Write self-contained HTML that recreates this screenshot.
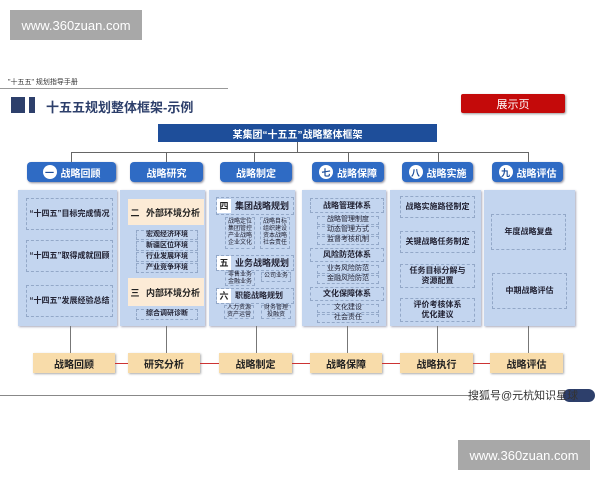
<!DOCTYPE html>
<html><head><meta charset="utf-8"><style>
*{margin:0;padding:0;box-sizing:border-box}
body{width:600px;height:480px;background:#fff;position:relative;overflow:hidden;font-family:"Liberation Sans","Noto Sans CJK SC",sans-serif;color:#1f2f5a}
.a{position:absolute}
.wm{background:#a8a8a8;color:#fff;font-size:13px;display:flex;align-items:center;justify-content:center}
.btn{background:#2f6bc4;color:#fff;font-size:10px;font-weight:bold;border-radius:4px;display:flex;align-items:center;justify-content:center;box-shadow:1px 1px 2px #889}
.circ{width:14px;height:14px;border-radius:50%;background:#fff;color:#1e4e9a;font-size:9px;display:inline-flex;align-items:center;justify-content:center;margin-right:4px}
.pan{background:#c3d5ef;box-shadow:1px 1px 2px #aab}
.dt{border:1px dashed #93a8c8;font-size:8px;font-weight:bold;color:#223;display:flex;align-items:center;justify-content:center;text-align:center;line-height:1.2}
.sm{font-size:6px;font-weight:normal}
.org{background:#f8dcaa;font-size:10px;font-weight:bold;color:#222;display:flex;align-items:center;justify-content:center;box-shadow:1px 1px 2px #aaa}
.beige{background:#fcebd6;font-size:9px;font-weight:bold;display:flex;align-items:center;color:#222}
.vl{background:#777;width:1px}
.ra{height:1px;background:#c33}
.lab{background:#fff;font-size:9px;font-weight:bold;color:#222;width:14px;height:14px;display:inline-flex;align-items:center;justify-content:center;margin-right:4px}
</style></head><body>
<div class="a wm" style="left:10px;top:10px;width:132px;height:30px">www.360zuan.com</div>
<div class="a" style="left:8px;top:77px;font-size:7px;color:#333">"十五五" 规划指导手册</div>
<div class="a" style="left:0;top:88px;width:228px;height:1px;background:#999"></div>
<div class="a" style="left:11px;top:97px;width:14px;height:16px;background:#2d3f6b"></div>
<div class="a" style="left:29px;top:97px;width:6px;height:16px;background:#2d3f6b"></div>
<div class="a" style="left:46px;top:97px;font-size:13px;font-weight:bold;color:#2d3f6b">十五五规划整体框架-示例</div>
<div class="a" style="left:461px;top:94px;width:104px;height:19px;background:#c40a0a;color:#fff;font-size:11px;display:flex;align-items:center;justify-content:center;border-radius:2px;box-shadow:1px 1px 2px #999">展示页</div>
<div class="a" style="left:158px;top:124px;width:279px;height:18px;background:#1e4e9a;color:#fff;font-size:10px;font-weight:bold;display:flex;align-items:center;justify-content:center">某集团“十五五”战略整体框架</div>
<div class="a" style="left:297px;top:142px;width:1px;height:10px;background:#666"></div>
<div class="a" style="left:71px;top:152px;width:457px;height:1px;background:#666"></div>
<div class="a" style="left:71px;top:152px;width:1px;height:10px;background:#666"></div>
<div class="a" style="left:166px;top:152px;width:1px;height:10px;background:#666"></div>
<div class="a" style="left:254px;top:152px;width:1px;height:10px;background:#666"></div>
<div class="a" style="left:348px;top:152px;width:1px;height:10px;background:#666"></div>
<div class="a" style="left:438px;top:152px;width:1px;height:10px;background:#666"></div>
<div class="a" style="left:528px;top:152px;width:1px;height:10px;background:#666"></div>

<div class="a btn" style="left:27px;top:162px;width:89px;height:20px"><span class="circ">一</span>战略回顾</div>
<div class="a btn" style="left:130px;top:162px;width:73px;height:20px">战略研究</div>
<div class="a btn" style="left:220px;top:162px;width:72px;height:20px">战略制定</div>
<div class="a btn" style="left:312px;top:162px;width:72px;height:20px"><span class="circ">七</span>战略保障</div>
<div class="a btn" style="left:402px;top:162px;width:71px;height:20px"><span class="circ">八</span>战略实施</div>
<div class="a btn" style="left:492px;top:162px;width:71px;height:20px"><span class="circ">九</span>战略评估</div>

<div class="a pan" style="left:18px;top:190px;width:99px;height:136px"></div>
<div class="a dt" style="left:26px;top:198px;width:87px;height:32px">“十四五”目标完成情况</div>
<div class="a dt" style="left:26px;top:240px;width:87px;height:32px">“十四五”取得成就回顾</div>
<div class="a dt" style="left:26px;top:285px;width:87px;height:32px">“十四五”发展经验总结</div>

<div class="a pan" style="left:120px;top:190px;width:85px;height:136px"></div>
<div class="a beige" style="left:128px;top:199px;width:76px;height:26px"><span class="lab" style="background:none">二</span>外部环境分析</div>
<div class="a dt" style="left:136px;top:230px;width:62px;height:10px;font-size:7px">宏观经济环境</div>
<div class="a dt" style="left:136px;top:241px;width:62px;height:10px;font-size:7px">新疆区位环境</div>
<div class="a dt" style="left:136px;top:252px;width:62px;height:10px;font-size:7px">行业发展环境</div>
<div class="a dt" style="left:136px;top:263px;width:62px;height:10px;font-size:7px">产业竞争环境</div>
<div class="a beige" style="left:128px;top:278px;width:76px;height:28px"><span class="lab" style="background:none">三</span>内部环境分析</div>
<div class="a dt" style="left:136px;top:309px;width:62px;height:11px;font-size:7px">综合调研诊断</div>

<div class="a pan" style="left:209px;top:190px;width:86px;height:136px"></div>
<div class="a dt" style="left:216px;top:197px;width:78px;height:18px;justify-content:flex-start;font-size:9px"><span class="lab">四</span>集团战略规划</div>
<div class="a dt sm" style="left:225px;top:217px;width:30px;height:32px">战略定位<br>集团管控<br>产业战略<br>企业文化</div>
<div class="a dt sm" style="left:260px;top:217px;width:30px;height:32px">战略目标<br>组织建设<br>资本战略<br>社会责任</div>
<div class="a dt" style="left:216px;top:255px;width:78px;height:16px;justify-content:flex-start;font-size:9px"><span class="lab">五</span>业务战略规划</div>
<div class="a dt sm" style="left:225px;top:272px;width:30px;height:14px">零售业务<br>金融业务</div>
<div class="a dt sm" style="left:261px;top:272px;width:30px;height:10px">公司业务</div>
<div class="a dt" style="left:216px;top:288px;width:78px;height:16px;justify-content:flex-start;font-size:8px"><span class="lab">六</span>职能战略规划</div>
<div class="a dt sm" style="left:224px;top:305px;width:30px;height:14px">人力资源<br>资产运营</div>
<div class="a dt sm" style="left:261px;top:305px;width:30px;height:14px">财务管理<br>投融资</div>

<div class="a pan" style="left:302px;top:190px;width:84px;height:136px"></div>
<div class="a dt" style="left:310px;top:198px;width:74px;height:15px">战略管理体系</div>
<div class="a dt sm" style="left:317px;top:216px;width:62px;height:9px;font-size:7px">战略管理制度</div>
<div class="a dt sm" style="left:317px;top:226px;width:62px;height:9px;font-size:7px">动态管理方式</div>
<div class="a dt sm" style="left:317px;top:236px;width:62px;height:9px;font-size:7px">监督考核机制</div>
<div class="a dt" style="left:310px;top:248px;width:74px;height:14px">风险防范体系</div>
<div class="a dt sm" style="left:317px;top:265px;width:62px;height:9px;font-size:7px">业务风险防范</div>
<div class="a dt sm" style="left:317px;top:275px;width:62px;height:9px;font-size:7px">金融风险防范</div>
<div class="a dt" style="left:310px;top:287px;width:74px;height:14px">文化保障体系</div>
<div class="a dt sm" style="left:317px;top:304px;width:62px;height:9px;font-size:7px">文化建设</div>
<div class="a dt sm" style="left:317px;top:314px;width:62px;height:9px;font-size:7px">社会责任</div>

<div class="a pan" style="left:390px;top:190px;width:91px;height:136px"></div>
<div class="a dt" style="left:400px;top:196px;width:75px;height:22px">战略实施路径制定</div>
<div class="a dt" style="left:400px;top:231px;width:75px;height:22px">关键战略任务制定</div>
<div class="a dt" style="left:400px;top:264px;width:75px;height:24px">任务目标分解与<br>资源配置</div>
<div class="a dt" style="left:400px;top:298px;width:75px;height:24px">评价考核体系<br>优化建议</div>

<div class="a pan" style="left:484px;top:190px;width:91px;height:136px"></div>
<div class="a dt" style="left:491px;top:214px;width:75px;height:36px">年度战略复盘</div>
<div class="a dt" style="left:492px;top:273px;width:75px;height:36px">中期战略评估</div>

<div class="a vl" style="left:70px;top:326px;height:27px"></div>
<div class="a vl" style="left:166px;top:326px;height:27px"></div>
<div class="a vl" style="left:256px;top:326px;height:27px"></div>
<div class="a vl" style="left:347px;top:326px;height:27px"></div>
<div class="a vl" style="left:437px;top:326px;height:27px"></div>
<div class="a vl" style="left:528px;top:326px;height:27px"></div>

<div class="a org" style="left:33px;top:353px;width:82px;height:20px">战略回顾</div>
<div class="a org" style="left:128px;top:353px;width:72px;height:20px">研究分析</div>
<div class="a org" style="left:219px;top:353px;width:73px;height:20px">战略制定</div>
<div class="a org" style="left:310px;top:353px;width:72px;height:20px">战略保障</div>
<div class="a org" style="left:400px;top:353px;width:73px;height:20px">战略执行</div>
<div class="a org" style="left:490px;top:353px;width:73px;height:20px">战略评估</div>
<div class="a ra" style="left:115px;top:363px;width:13px"></div>
<div class="a ra" style="left:200px;top:363px;width:19px"></div>
<div class="a ra" style="left:292px;top:363px;width:18px"></div>
<div class="a ra" style="left:382px;top:363px;width:18px"></div>
<div class="a ra" style="left:473px;top:363px;width:17px"></div>

<div class="a" style="left:0;top:395px;width:470px;height:1px;background:#888"></div>
<div class="a" style="left:563px;top:389px;width:32px;height:13px;border-radius:7px;background:#2d3f6b"></div>
<div class="a" style="left:468px;top:387px;font-size:11px;color:#333">搜狐号@元杭知识星球</div>
<div class="a wm" style="left:458px;top:440px;width:132px;height:30px">www.360zuan.com</div>
</body></html>
